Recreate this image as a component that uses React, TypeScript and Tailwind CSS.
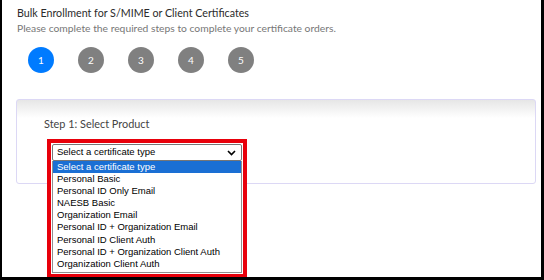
import React from 'react';

const OPTIONS = [
  'Select a certificate type',
  'Personal Basic',
  'Personal ID Only Email',
  'NAESB Basic',
  'Organization Email',
  'Personal ID + Organization Email',
  'Personal ID Client Auth',
  'Personal ID + Organization Client Auth',
  'Organization Client Auth',
];

const STEPS = [1, 2, 3, 4, 5];

const App: React.FC = () => {
  return (
    <div className="w-[544px] h-[280px] overflow-hidden bg-white border-l-2 border-r-[3px] border-b-[3px] border-black font-['Lato',sans-serif]">
      <div className="pl-[15px] pt-[5px]">
        <h1 className="text-[10.7px] leading-[16px] text-[#2b2b2b]">Bulk Enrollment for S/MIME or Client Certificates</h1>
        <p className="mt-px text-[10.3px] leading-[13px] text-[#777]">
          Please complete the required steps to complete your certificate orders.
        </p>
      </div>

      {/* Steps */}
      <div className="flex gap-[24px] pl-[26px] mt-[12px]">
        {STEPS.map(n => (
          <div
            key={n}
            className={`w-[26px] h-[26px] rounded-full flex items-center justify-center text-[10px] text-white ${
              n === 1 ? 'bg-[#007bff]' : 'bg-[#808080]'
            }`}
          >
            {n}
          </div>
        ))}
      </div>

      {/* Card */}
      <div className="ml-[14px] mr-[5px] mt-[26px] h-[85px] rounded-[3px] border border-[#dcd8f5] bg-gradient-to-b from-[#e6e6e6] to-white to-[18px]">
        <div className="pl-[27px] pt-[17px] text-[10.9px] leading-[14px] text-[#444]">Step 1: Select Product</div>

        <div className="ml-[30px] mt-[8px] w-[200px] border-[4px] border-b-[10px] border-[#e8000b] bg-white p-px font-['Liberation_Sans',Arial,sans-serif] text-[9.5px] text-black">
          <div className="h-[17px] rounded-[2px] border border-[#767676] flex items-center justify-between pl-[4px] pr-[5px]">
            <span>Select a certificate type</span>
            <svg width="9" height="6" viewBox="0 0 9 6" fill="none">
              <path d="M1 1l3.5 3.5L8 1" stroke="#000" strokeWidth="1.6" />
            </svg>
          </div>
          <div className="border border-t-0 border-[#8f8f8f] pb-[2px]">
            {OPTIONS.map((o, i) => (
              <div
                key={o}
                className={`h-[12.1px] leading-[12px] pl-[4px] ${i === 0 ? 'bg-[#1a6fd4] text-white' : ''}`}
              >
                {o}
              </div>
            ))}
          </div>
        </div>
      </div>
    </div>
  );
};

export default App;
